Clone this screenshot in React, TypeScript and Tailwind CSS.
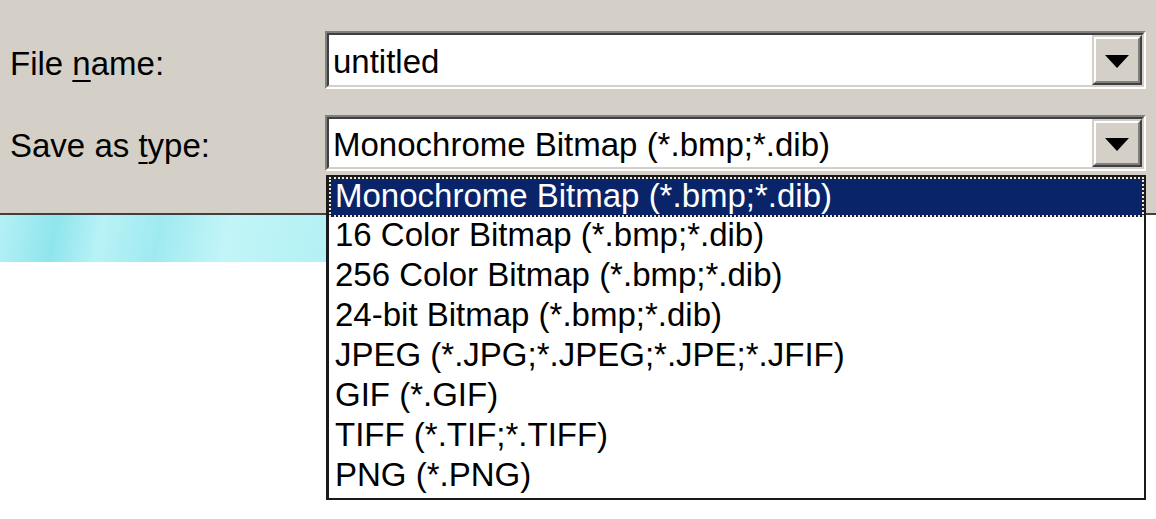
const TYPES = [
  "Monochrome Bitmap (*.bmp;*.dib)",
  "16 Color Bitmap (*.bmp;*.dib)",
  "256 Color Bitmap (*.bmp;*.dib)",
  "24-bit Bitmap (*.bmp;*.dib)",
  "JPEG (*.JPG;*.JPEG;*.JPE;*.JFIF)",
  "GIF (*.GIF)",
  "TIFF (*.TIF;*.TIFF)",
  "PNG (*.PNG)",
];

function DropButton() {
  return (
    <div className="w-[50px] h-full border-2 border-t-[#d4d0c8] border-l-[#d4d0c8] border-b-[#404040] border-r-[#404040]">
      <div className="w-full h-full bg-[#d4d0c8] border-2 border-t-white border-l-white border-b-[#808080] border-r-[#808080] flex items-center justify-center pt-[3px]">
        <svg width="24" height="13" viewBox="0 0 24 13">
          <polygon points="0,0 24,0 12,13" fill="#000" />
        </svg>
      </div>
    </div>
  );
}

function Field({ value, height }: { value: string; height: string }) {
  return (
    <div
      className={`w-[821px] ${height} border-2 border-t-[#808080] border-l-[#808080] border-b-white border-r-white`}
    >
      <div className="w-full h-full bg-white border-2 border-t-[#404040] border-l-[#404040] border-b-[#d4d0c8] border-r-[#d4d0c8] flex">
        <div className="flex-1 pl-[4px] pt-[4px] text-[33px] leading-[36px] flex items-center text-black whitespace-nowrap">
          {value}
        </div>
        <DropButton />
      </div>
    </div>
  );
}

export default function App() {
  return (
    <div
      className="w-[1156px] h-[519px] relative overflow-hidden bg-white text-black"
      style={{ fontFamily: '"Liberation Sans", Arial, sans-serif' }}
    >
      <div className="h-[215px] bg-[#d4d0c8] border-b-2 border-[#404040] pt-[31px] flex flex-col gap-[26px]">
        <div className="flex items-center">
          <div className="w-[325px] pl-[10px] pt-[8px] text-[33px] leading-[36px]">
            File <u className="underline-offset-[5px] decoration-2">n</u>ame:
          </div>
          <Field value="untitled" height="h-[58px]" />
        </div>
        <div className="flex items-center">
          <div className="w-[325px] pl-[10px] pt-[6px] text-[33px] leading-[36px]">
            Save as <u className="underline-offset-[5px] decoration-2">t</u>ype:
          </div>
          <Field value="Monochrome Bitmap (*.bmp;*.dib)" height="h-[56px]" />
        </div>
      </div>

      <div className="h-[47px] w-[1146px] bg-[linear-gradient(100deg,#b4f1f5_0%,#8fe5ec_5%,#b8f2f6_9%,#9feaf0_14%,#c2f5f8_20%,#b0f0f4_30%,#c6f6f9_45%,#b2f0f4_60%,#c4f6f8_80%,#b6f2f5_100%)]" />

      <div className="absolute left-[326px] top-[175px] w-[820px] h-[325px] bg-white border-2 border-[#1a1a1a] border-l-[3px] text-[33px]">
        {TYPES.map((t, i) =>
          i === 0 ? (
            <div key={t} className="bg-[#1e1e1e]">
              <div className="h-10 bg-[#0a246a] bg-clip-padding border-2 border-dotted border-[#e8e8e8] text-white leading-[34px] pl-[4px] whitespace-nowrap">
                {t}
              </div>
            </div>
          ) : (
            <div key={t} className="h-10 leading-[36px] pl-[6px] whitespace-nowrap">
              {t}
            </div>
          )
        )}
      </div>
    </div>
  );
}
